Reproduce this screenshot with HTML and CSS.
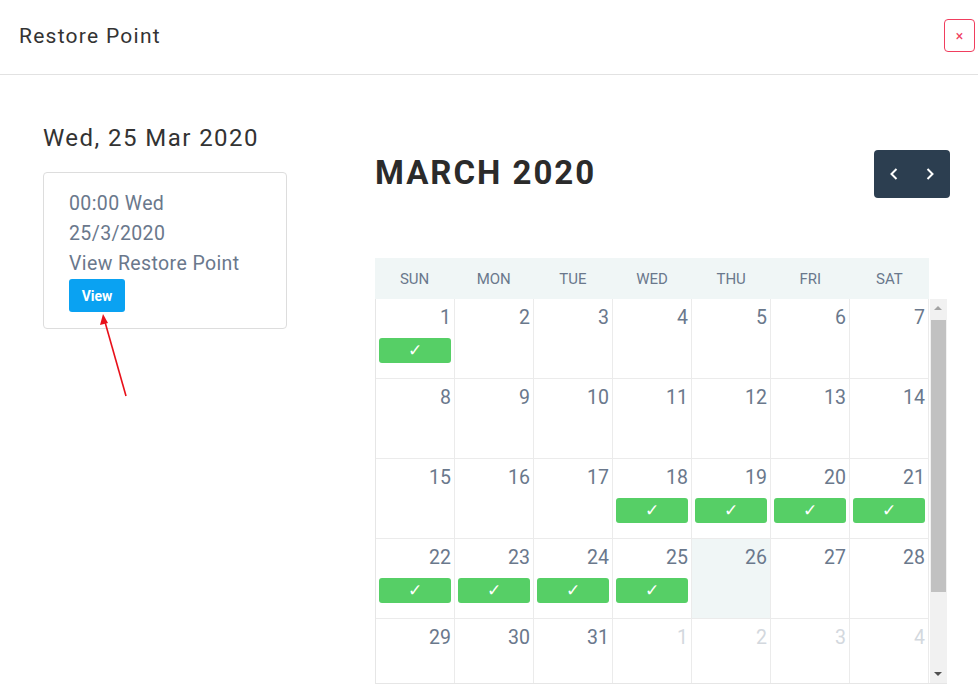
FILE: index.html
```html
<!DOCTYPE html>
<html lang="en">
<head>
  <meta charset="UTF-8">
  <title>Restore Point</title>
  <link rel="stylesheet" href="styles.css">
</head>
<body>
  <div class="modal-header">
    <h4 class="modal-title">Restore Point</h4>
    <button class="close-btn">&times;</button>
  </div>

  <div class="modal-body">
    <div class="day-panel">
      <h3 class="day-title">Wed, 25 Mar 2020</h3>
      <div class="point-card">
        <div class="point-line">00:00 Wed</div>
        <div class="point-line">25/3/2020</div>
        <div class="point-line">View Restore Point</div>
        <button class="view-btn">View</button>
      </div>
    </div>

    <div class="calendar">
      <div class="cal-top">
        <h2 class="cal-title">MARCH 2020</h2>
        <div class="cal-nav">
          <button class="nav-btn" aria-label="Previous">
            <svg width="10" height="14" viewBox="0 0 10 14"><polyline points="7.5,2 2.5,7 7.5,12" fill="none" stroke="#fff" stroke-width="2" /></svg>
          </button>
          <button class="nav-btn" aria-label="Next">
            <svg width="10" height="14" viewBox="0 0 10 14"><polyline points="2.5,2 7.5,7 2.5,12" fill="none" stroke="#fff" stroke-width="2" /></svg>
          </button>
        </div>
      </div>

      <div class="cal-head">
        <div>SUN</div><div>MON</div><div>TUE</div><div>WED</div><div>THU</div><div>FRI</div><div>SAT</div>
      </div>
      <div class="cal-scroll">
        <div class="cal-view">
          <div class="cal-grid" id="grid"></div>
        </div>
        <div class="scrollbar">
          <div class="sb-arrow up"></div>
          <div class="sb-track"><div class="sb-thumb"></div></div>
          <div class="sb-arrow down"></div>
        </div>
      </div>
    </div>
  </div>

  <svg class="pointer" width="60" height="110" viewBox="0 0 60 110">
    <line x1="56" y1="104" x2="35" y2="30" stroke="#e8101a" stroke-width="1.6" />
    <polygon points="33,22 30,33 38,31" fill="#e8101a" />
  </svg>

  <script>
    const done = [1, 18, 19, 20, 21, 22, 23, 24, 25];
    const grid = document.getElementById('grid');
    const days = [];
    for (let d = 1; d <= 31; d++) days.push({ n: d, cur: true });
    for (let d = 1; d <= 4; d++) days.push({ n: d, cur: false });
    days.forEach(day => {
      let cls = 'cell';
      if (!day.cur) cls += ' other';
      if (day.cur && day.n === 26) cls += ' today';
      const mark = day.cur && done.includes(day.n) ? '<div class="event">&#10003;</div>' : '';
      grid.innerHTML += `<div class="${cls}"><div class="num">${day.n}</div>${mark}</div>`;
    });
  </script>
</body>
</html>
```

FILE: styles.css
```css
body { margin: 0; font-family: Roboto, "Noto Sans", sans-serif; color: #333; background: #fff; }
button { font-family: inherit; cursor: pointer; }

.modal-header { height: 74px; border-bottom: 1px solid #e2e2e2; display: flex; align-items: center; justify-content: space-between; padding: 0 3px 0 19px; }
.modal-title { margin: 0 0 2px; font-size: 21px; font-weight: 400; color: #333; letter-spacing: 0.06em; }
.close-btn { width: 31px; height: 33px; margin-bottom: 3px; border: 1px solid #f03e5e; border-radius: 4px; background: #fff; color: #f03e5e; font-size: 14px; padding: 0; line-height: 1; }

.modal-body { display: flex; padding: 48px 28px 0 43px; gap: 88px; }
.day-panel { width: 244px; flex-shrink: 0; }
.day-title { margin: 0 0 19px; font-size: 24px; font-weight: 400; line-height: 30px; color: #333; letter-spacing: 0.06em; }
.point-card { border: 1px solid #ddd; border-radius: 4px; padding: 16px 25px 16px; }
.point-line { font-size: 19.5px; line-height: 30px; color: #6a788c; letter-spacing: 0.02em; }
.view-btn { background: #0aa2f2; color: #fff; border: none; border-radius: 3px; font-size: 14px; font-weight: 700; width: 56px; height: 33px; padding: 0; }

.calendar { flex: 1; }
.cal-top { display: flex; justify-content: space-between; align-items: flex-start; margin-top: 27px; height: 108px; }
.cal-title { margin: 3px 0 0; font-size: 33px; font-weight: 700; color: #2b2b2b; line-height: 40px; letter-spacing: 0.06em; }
.cal-nav { display: flex; background: #2c3e50; border-radius: 4px; height: 48px; padding: 0 2px; }
.nav-btn { background: none; border: none; width: 36px; padding: 0; display: flex; align-items: center; justify-content: center; }

.cal-head { width: 554px; display: grid; grid-template-columns: repeat(7, 1fr); background: #f0f6f6; height: 41px; align-items: center; }
.cal-head div { text-align: center; font-size: 15px; color: #6a788c; }

.cal-scroll { display: flex; width: 572px; height: 384px; border-bottom: 1px solid #e6e6e6; }
.cal-view { width: 554px; overflow: hidden; }
.cal-grid { display: grid; grid-template-columns: repeat(7, 1fr); border-left: 1px solid #e6e6e6; }
.cell { height: 80px; box-sizing: border-box; border-right: 1px solid #ebebeb; border-bottom: 1px solid #ebebeb; padding: 8px 3px 0; }
.cell.today { background: #f0f6f6; }
.num { text-align: right; font-size: 19.5px; line-height: 22px; color: #6a788c; padding-right: 0; }
.other .num { color: #d3d8de; }
.event { margin-top: 9px; height: 25px; background: #56cf66; border-radius: 3px; color: #fff; text-align: center; font-size: 17px; line-height: 25px; }

.scrollbar { width: 17px; margin-left: 1px; background: #f1f1f1; display: flex; flex-direction: column; }
.sb-arrow { height: 17px; position: relative; }
.sb-arrow.up::after, .sb-arrow.down::after { content: ""; position: absolute; left: 4px; border-left: 4px solid transparent; border-right: 4px solid transparent; }
.sb-arrow.up::after { top: 7px; border-bottom: 4px solid #a3a3a3; }
.sb-arrow.down::after { top: 6px; border-top: 4px solid #505050; }
.sb-track { flex: 1; padding: 4px 1px 0; }
.sb-thumb { height: 272px; background: #c1c1c1; }

.pointer { position: absolute; left: 70px; top: 292px; }
```
